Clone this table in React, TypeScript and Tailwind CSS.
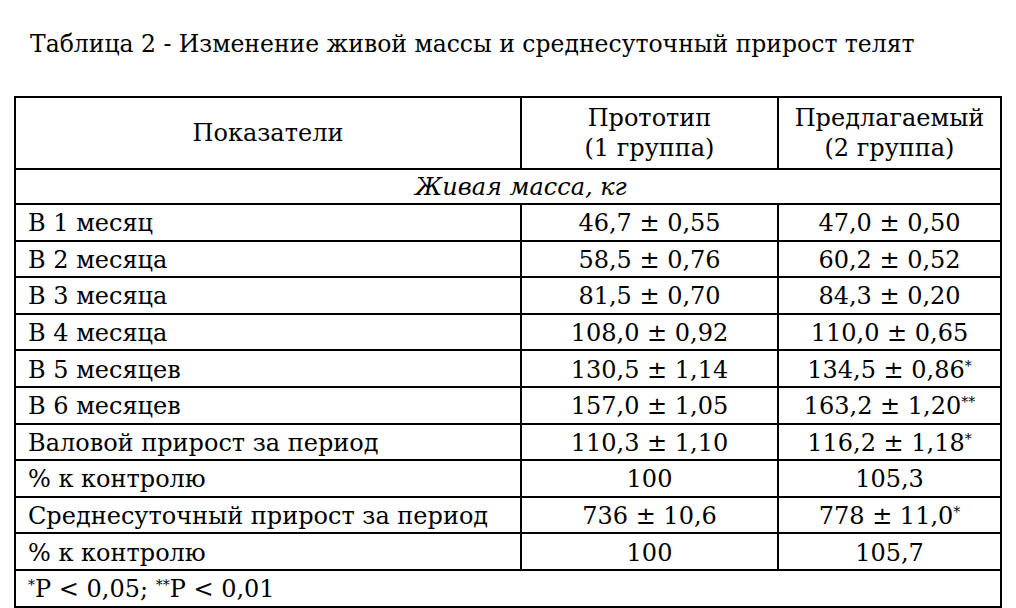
import React from "react";

type Row = { label: string; a: string; b: string; bs?: string };

const rows: Row[] = [
  { label: "В 1 месяц", a: "46,7 ± 0,55", b: "47,0 ± 0,50" },
  { label: "В 2 месяца", a: "58,5 ± 0,76", b: "60,2 ± 0,52" },
  { label: "В 3 месяца", a: "81,5 ± 0,70", b: "84,3 ± 0,20" },
  { label: "В 4 месяца", a: "108,0 ± 0,92", b: "110,0 ± 0,65" },
  { label: "В 5 месяцев", a: "130,5 ± 1,14", b: "134,5 ± 0,86", bs: "*" },
  { label: "В 6 месяцев", a: "157,0 ± 1,05", b: "163,2 ± 1,20", bs: "**" },
  { label: "Валовой прирост за период", a: "110,3 ± 1,10", b: "116,2 ± 1,18", bs: "*" },
  { label: "% к контролю", a: "100", b: "105,3" },
  { label: "Среднесуточный прирост за период", a: "736 ± 10,6", b: "778 ± 11,0", bs: "*" },
  { label: "% к контролю", a: "100", b: "105,7" },
];

export default function App() {
  return (
    <div className="w-[1016px] h-[608px] bg-white text-black overflow-hidden font-['DejaVu_Serif']">
      <div className="pt-[28px] pl-[30px] text-[23.5px] leading-[32px] whitespace-nowrap font-['DejaVu_Serif']">
        Таблица 2 - Изменение живой массы и среднесуточный прирост телят
      </div>
      <table className="ml-[14px] mt-[36px] w-[986px] table-fixed border-collapse text-[24px] leading-[30px] font-['DejaVu_Serif']">
        <colgroup>
          <col className="w-[506px]" />
          <col className="w-[257px]" />
          <col className="w-[223px]" />
        </colgroup>
        <tbody>
          <tr className="h-[72px]">
            <td className="border-2 border-black text-center align-middle">Показатели</td>
            <td className="border-2 border-black text-center align-middle">
              Прототип
              <br />
              (1 группа)
            </td>
            <td className="border-2 border-black text-center align-middle">
              Предлагаемый
              <br />
              (2 группа)
            </td>
          </tr>
          <tr className="h-[35px]">
            <td colSpan={3} className="border-2 border-black text-center italic pl-[26px] leading-[26px]">
              Живая масса, кг
            </td>
          </tr>
          {rows.map((r, i) => (
            <tr key={i} className="h-[36.6px]">
              <td className="border-2 border-black pl-[12px] pt-[2px] leading-[26px] whitespace-nowrap">{r.label}</td>
              <td className="border-2 border-black text-center pt-[2px] leading-[26px] whitespace-nowrap">{r.a}</td>
              <td className="border-2 border-black text-center pt-[2px] leading-[26px] whitespace-nowrap">
                {r.b}
                {r.bs ? <sup className="text-[14px] leading-none">{r.bs}</sup> : null}
              </td>
            </tr>
          ))}
          <tr className="h-[36.6px]">
            <td colSpan={3} className="border-2 border-black pl-[12px] pt-[2px] leading-[26px]">
              <sup className="text-[14px] leading-none">*</sup>P &lt; 0,05;{" "}
              <sup className="text-[14px] leading-none">**</sup>P &lt; 0,01
            </td>
          </tr>
        </tbody>
      </table>
    </div>
  );
}
